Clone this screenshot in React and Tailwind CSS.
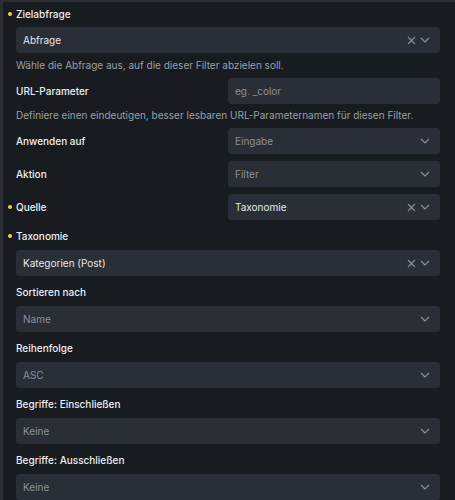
import React from "react";

const font = { fontFamily: "Inter, 'Noto Sans', sans-serif" };

function XIcon() {
  return (
    <svg width="9" height="9" viewBox="0 0 9 9" className="text-[#8a8f98]">
      <path d="M1 1 L8 8 M8 1 L1 8" stroke="currentColor" strokeWidth="1.1" fill="none" />
    </svg>
  );
}
function Chevron() {
  return (
    <svg width="10" height="6" viewBox="0 0 10 6" className="text-[#8a8f98]">
      <path d="M1 1 L5 5 L9 1" stroke="currentColor" strokeWidth="1.2" fill="none" />
    </svg>
  );
}

function Select({ value, placeholder, clear, className = "" }) {
  return (
    <div className={"h-[26px] rounded-[3px] bg-[#2a2f37] flex items-center pl-[7px] pr-[10px] " + className}>
      <span className={"flex-1 text-[10px] " + (placeholder ? "text-[#8b9098]" : "text-[#e6e8eb]")}>
        {value}
      </span>
      <div className="flex items-center gap-[4px]">
        {clear && <XIcon />}
        <Chevron />
      </div>
    </div>
  );
}

function Label({ children, dot, className = "" }) {
  return (
    <div className={"relative h-[16px] flex items-center text-[10px] font-medium text-[#eceef0] whitespace-nowrap " + className}>
      {dot && <span className="absolute left-[-8px] top-[6px] w-[4px] h-[4px] rounded-full bg-[#f2d23c]" />}
      {children}
    </div>
  );
}

function Help({ children, className = "" }) {
  return <div className={"h-[16px] flex items-center text-[10px] text-[#9aa0a8] whitespace-nowrap " + className}>{children}</div>;
}

function Row({ label, dot, children, className = "" }) {
  return (
    <div className={"flex items-center " + className}>
      <Label dot={dot} className="flex-1">{label}</Label>
      <div className="w-[212px]">{children}</div>
    </div>
  );
}

export default function App() {
  return (
    <div style={font} className="w-[455px] h-[500px] overflow-hidden bg-[#181b1f] border-l-[3px] border-t-2 border-[#2a2e34]">
      <div className="pl-[13px] pr-[15px] pt-[4px] flex flex-col">
        <Label dot>Zielabfrage</Label>
        <Select value="Abfrage" clear className="mt-[5px]" />
        <Help className="mt-[4px]">Wähle die Abfrage aus, auf die dieser Filter abzielen soll.</Help>
        <Row label="URL-Parameter" className="mt-[5px]">
          <div className="h-[26px] rounded-[3px] bg-[#2a2f37] flex items-center pl-[7px] text-[10px] text-[#8b9098]">
            eg. _color
          </div>
        </Row>
        <Help className="mt-[3px]">Definiere einen eindeutigen, besser lesbaren URL-Parameternamen für diesen Filter.</Help>
        <Row label="Anwenden auf" className="mt-[5px]">
          <Select value="Eingabe" placeholder />
        </Row>
        <Row label="Aktion" className="mt-[7px]">
          <Select value="Filter" placeholder />
        </Row>
        <Row label="Quelle" dot className="mt-[7px]">
          <Select value="Taxonomie" clear />
        </Row>
        <Label dot className="mt-[8px]">Taxonomie</Label>
        <Select value="Kategorien (Post)" clear className="mt-[6px]" />
        <Label className="mt-[8px]">Sortieren nach</Label>
        <Select value="Name" placeholder className="mt-[6px]" />
        <Label className="mt-[8px]">Reihenfolge</Label>
        <Select value="ASC" placeholder className="mt-[6px]" />
        <Label className="mt-[8px]">Begriffe: Einschließen</Label>
        <Select value="Keine" placeholder className="mt-[6px]" />
        <Label className="mt-[8px]">Begriffe: Ausschließen</Label>
        <Select value="Keine" placeholder className="mt-[6px]" />
      </div>
    </div>
  );
}
